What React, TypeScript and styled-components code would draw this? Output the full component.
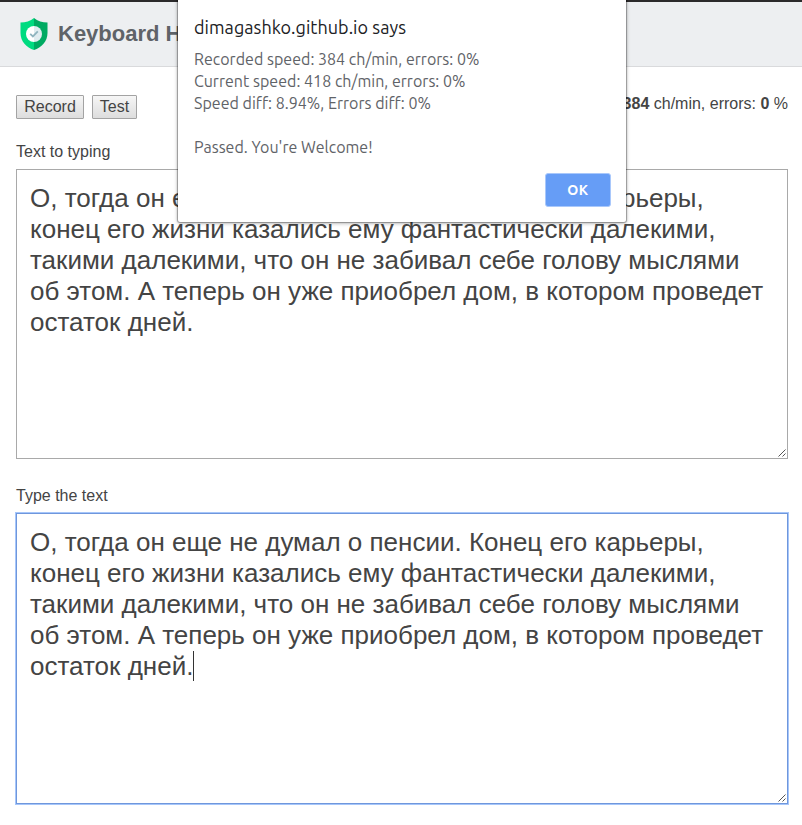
import React from "react";
import styled, { createGlobalStyle } from "styled-components";

const GlobalStyle = createGlobalStyle`
  *, *::before, *::after { box-sizing: border-box; }
  body {
    margin: 0;
    background: #fff;
    color: #444;
    font: 16px/18px "Liberation Sans", Arial, sans-serif;
    overflow: hidden;
  }
`;

const Page = styled.div`
  position: relative;
  height: 825px;
  overflow: hidden;
`;

const Header = styled.header`
  display: flex;
  align-items: center;
  height: 67px;
  padding: 0 20px;
  border-top: 2px solid #2b2a2b;
  border-bottom: 1px solid #d9dadc;
  background: #edeff1;
`;

const Shield = styled.svg`
  flex: none;
  width: 28px;
  height: 32px;
  margin-right: 10px;
`;

const Title = styled.h1`
  margin: 0;
  color: #5f6368;
  font-size: 22px;
  line-height: 26px;
  white-space: nowrap;
`;

const Main = styled.main`
  padding: 27px 14px 0 16px;
`;

const Toolbar = styled.div`
  display: flex;
  height: 49px;
  align-items: flex-start;
  gap: 8px;
`;

const ToolButton = styled.button<{ $width: number }>`
  width: ${(p) => p.$width}px;
  height: 24px;
  margin-top: 1px;
  padding: 0 0 1px;
  border: 1px solid #a3a3a3;
  border-radius: 1px;
  background: linear-gradient(#f6f6f6, #dddddd);
  color: #444;
  font: 16px/18px "Liberation Sans", Arial, sans-serif;
`;

const Stats = styled.div`
  margin: 1px 0 0 auto;
  white-space: nowrap;
`;

const Field = styled.section<{ $gap: number }>`
  margin-bottom: ${(p) => p.$gap}px;
`;

const Label = styled.div`
  height: 26px;
`;

const TextBox = styled.div<{ $focused?: boolean }>`
  position: relative;
  height: ${(p) => (p.$focused ? 291 : 290)}px;
  padding: 13px;
  border: 1px solid ${(p) => (p.$focused ? "#6f97dc" : "#a9a9a9")};
  box-shadow: ${(p) => (p.$focused ? "0 0 0 1px #a6c6fa" : "none")};
  font-size: 26px;
  line-height: 31px;
  white-space: pre;
`;

const Caret = styled.span`
  display: inline-block;
  width: 1px;
  height: 30px;
  background: #333;
  vertical-align: -6px;
`;

const Grip = styled.svg`
  position: absolute;
  right: 1px;
  bottom: 1px;
  width: 8px;
  height: 8px;
`;

const Dialog = styled.div`
  position: absolute;
  top: -4px;
  left: 178px;
  width: 448px;
  height: 226px;
  padding: 20px 16px 16px;
  display: flex;
  flex-direction: column;
  border-radius: 2px;
  background: #fff;
  box-shadow: 0 0 1px 1px rgba(0, 0, 0, 0.3), 0 1px 4px rgba(0, 0, 0, 0.35);
  font-family: Ubuntu, "Noto Sans", sans-serif;
`;

const DialogTitle = styled.div`
  color: #202124;
  font-size: 18px;
  line-height: 22px;
  letter-spacing: 0.05px;
  white-space: nowrap;
`;

const Message = styled.div`
  margin-top: 10px;
  color: #5f6368;
  font-size: 16px;
  line-height: 22px;
`;

const Line = styled.div`
  height: 22px;
  letter-spacing: 0.02px;
  white-space: nowrap;
`;

const OkButton = styled.button`
  width: 66px;
  height: 34px;
  margin: auto -1px -1px auto;
  padding: 0;
  border: 1px solid #a9c8fb;
  border-radius: 3px;
  background: #669df6;
  color: #fff;
  font: 700 14px/20px Ubuntu, "Noto Sans", sans-serif;
  letter-spacing: 0.5px;
`;

const lines = [
  "О, тогда он еще не думал о пенсии. Конец его карьеры,",
  "конец его жизни казались ему фантастически далекими,",
  "такими далекими, что он не забивал себе голову мыслями",
  "об этом. А теперь он уже приобрел дом, в котором проведет",
  "остаток дней.",
];

const results = [
  "Recorded speed: 384 ch/min, errors: 0%",
  "Current speed: 418 ch/min, errors: 0%",
  "Speed diff: 8.94%, Errors diff: 0%",
  "",
  "Passed. You're Welcome!",
];

function ResizeGrip() {
  return (
    <Grip viewBox="0 0 8 8" fill="none" stroke="#555" strokeWidth="1">
      <path d="M0.5 7.5 7.5 0.5M4.5 7.5 7.5 4.5" />
    </Grip>
  );
}

export default function App() {
  return (
    <>
      <GlobalStyle />
      <Page>
        <Header>
          <Shield viewBox="0 0 28 32">
            <path d="M14 0C10.5 3 5.5 4.5 0.5 4.5V15C0.5 23.5 6.5 29.5 14 32Z" fill="#00db80" />
            <path d="M14 0C17.5 3 22.5 4.5 27.5 4.5V15C27.5 23.5 21.5 29.5 14 32Z" fill="#00aa62" />
            <path d="M14 8a8 8 0 0 0 0 16Z" fill="#fff" />
            <path d="M14 8a8 8 0 0 1 0 16Z" fill="#e0ecf0" />
            <path d="m10.2 15.8 2.7 2.6 4.9-5" fill="none" stroke="#8fb4bf" strokeWidth="1.8" />
          </Shield>
          <Title>Keyboard Handwriting</Title>
        </Header>
        <Main>
          <Toolbar>
            <ToolButton $width={68}>Record</ToolButton>
            <ToolButton $width={45}>Test</ToolButton>
            <Stats>
              Speed: <b>384</b> ch/min, errors: <b>0</b> %
            </Stats>
          </Toolbar>
          <Field $gap={28}>
            <Label>Text to typing</Label>
            <TextBox>
              {lines.join("\n")}
              <ResizeGrip />
            </TextBox>
          </Field>
          <Field $gap={0}>
            <Label>Type the text</Label>
            <TextBox $focused>
              {lines.join("\n")}
              <Caret />
              <ResizeGrip />
            </TextBox>
          </Field>
        </Main>
        <Dialog role="alertdialog">
          <DialogTitle>dimagashko.github.io says</DialogTitle>
          <Message>
            {results.map((text, i) => (
              <Line key={i}>{text}</Line>
            ))}
          </Message>
          <OkButton>OK</OkButton>
        </Dialog>
      </Page>
    </>
  );
}
